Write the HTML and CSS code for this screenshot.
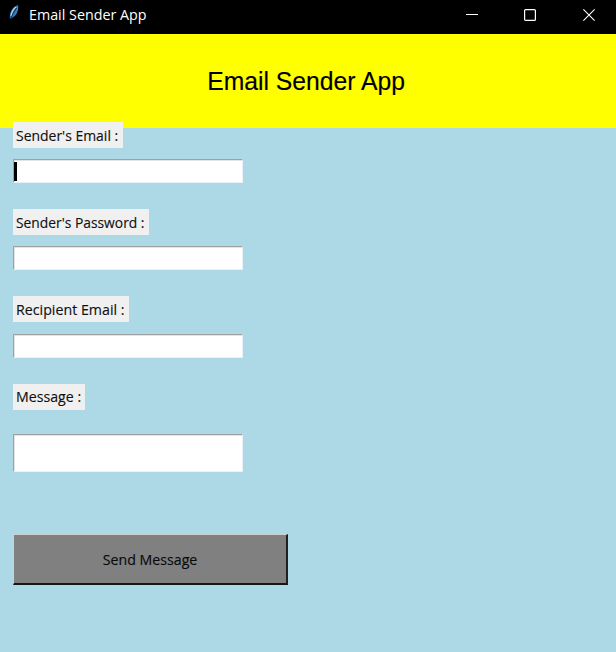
FILE: index.html
```html
<!DOCTYPE html>
<html lang="en">
<head>
<meta charset="utf-8">
<title>Email Sender App</title>
<link rel="stylesheet" href="styles.css">
</head>
<body>
<div class="titlebar">
  <svg class="feather" width="12" height="18" viewBox="0 0 12 18"><path d="M1 15C0 9 3 3 9 1C10 6 8 11 3 14Z" fill="#397fc0"/><path d="M2 12Q3 6 7 3" fill="none" stroke="#b8d9f2" stroke-width="1.1"/><path d="M1.5 15Q4 9 7.5 4" fill="none" stroke="#102438" stroke-width="1"/></svg>
  <span class="caption"><span class="fit">Email Sender App</span></span>
  <div class="controls">
    <svg width="12" height="12"><path d="M0 5.5H12" stroke="#fff"/></svg>
    <svg width="12" height="12"><rect x=".6" y=".6" width="10.8" height="10.8" rx="1" fill="none" stroke="#fff" stroke-width="1.2"/></svg>
    <svg width="12" height="12"><path d="M.4 .4L11.6 11.6M11.6 .4L.4 11.6" stroke="#fff" stroke-width="1.1"/></svg>
  </div>
</div>
<header class="banner"><h1>Email Sender App</h1></header>
<main class="form">
  <label class="label email"><span class="fit">Sender's Email :</span></label>
  <div class="entry"><span class="caret"></span></div>
  <label class="label password"><span class="fit">Sender's Password :</span></label>
  <div class="entry"></div>
  <label class="label recipient"><span class="fit">Recipient Email :</span></label>
  <div class="entry"></div>
  <label class="label message"><span class="fit">Message :</span></label>
  <div class="entry tall"></div>
  <button class="send"><span class="fit">Send Message</span></button>
</main>
</body>
</html>
```
FILE: styles.css
```css
* { box-sizing: border-box; }
body {
  margin: 0;
  height: 652px;
  overflow: hidden;
  background: #add8e6;
  color: #111;
  font: 15px/20px "Open Sans", "Noto Sans", sans-serif;
}
.fit { display: inline-block; white-space: nowrap; transform-origin: 0 50%; transform: scaleX(.93); }
.titlebar {
  display: flex;
  align-items: flex-start;
  height: 34px;
  padding: 4px 21px 0 9px;
  background: #000;
  color: #fff;
}
.feather { flex: none; }
.caption { width: 130px; margin: 0 0 0 8px; }
.caption .fit { transform: scaleX(.953); }
.controls { display: flex; gap: 47px; margin: 5px 0 0 auto; }
.controls svg { display: block; }
.controls svg:first-child { margin-right: -1px; }
.banner {
  display: flex;
  justify-content: center;
  height: 94px;
  padding: 32px 0 0;
  background: #ff0;
}
h1 {
  margin: 0 3px 0 0;
  color: #000;
  font: 26px/30px "Liberation Sans", Arial, sans-serif;
  transform: scaleX(.95);
  -webkit-text-stroke: .15px #000;
}
.form {
  position: relative;
  display: flex;
  flex-direction: column;
  align-items: flex-start;
  margin-top: -6px;
  padding-left: 13px;
}
.label { display: block; height: 26px; padding: 2.5px 0 0 3.4px; background: #f0f0f0; overflow: hidden; }
.label .fit, .send .fit { -webkit-text-stroke: .15px #111; }
.email { width: 110px; }
.password { width: 136px; }
.password .fit { transform: scaleX(.922); }
.recipient { width: 116px; }
.recipient .fit { transform: scaleX(.948); }
.message { width: 72.4px; }
.message .fit { transform: scaleX(.945); }
.entry {
  width: 230px;
  height: 24px;
  margin: 11px 0 26px;
  padding: 2px 0;
  background: #fff;
  border: 1px solid;
  border-color: #a0a0a0 #e8f1f5 #e8f1f5 #a0a0a0;
  box-shadow: inset 1px 1px #e3e3e3;
}
.entry + .label { margin-bottom: .4px; }
.caret { display: block; width: 3px; height: 19px; background: #000; }
.tall { height: 38px; margin: 23.8px 0 62px; }
.send {
  width: 275px;
  height: 51px;
  padding: 0;
  color: #080808;
  background: #808080;
  border: solid;
  border-width: 1px 2px 2px 1px;
  border-color: #d0d0d0 #202020 #161616 #d0d0d0;
  font: inherit;
}
.send .fit { transform-origin: 50% 50%; transform: scaleX(.945); }
```
